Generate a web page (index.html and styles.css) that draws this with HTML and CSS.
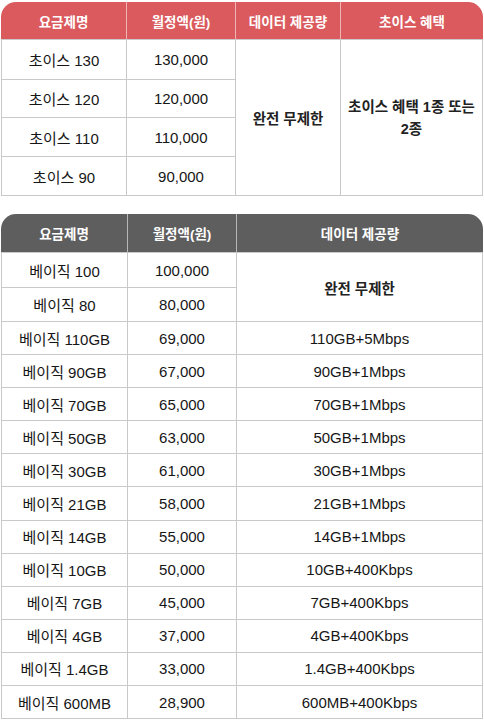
FILE: index.html
```html
<!DOCTYPE html>
<html lang="ko">
<head>
<meta charset="utf-8">
<link rel="stylesheet" href="styles.css">
</head>
<body>
<div class="page">
  <div class="wrap wrap-choice">
    <table class="plan plan-choice">
      <colgroup><col class="c1"><col class="c2"><col class="c3"><col class="c4"></colgroup>
      <thead>
        <tr><th>요금제명</th><th>월정액(원)</th><th>데이터 제공량</th><th>초이스 혜택</th></tr>
      </thead>
      <tbody>
        <tr class="r1"><td>초이스 130</td><td>130,000</td><td rowspan="4" class="strong">완전 무제한</td><td rowspan="4" class="strong benefit">초이스 혜택 1종 또는<br>2종</td></tr>
        <tr class="r2"><td>초이스 120</td><td>120,000</td></tr>
        <tr class="r3"><td>초이스 110</td><td>110,000</td></tr>
        <tr class="r4"><td>초이스 90</td><td>90,000</td></tr>
      </tbody>
    </table>
  </div>

  <div class="wrap wrap-basic">
    <table class="plan plan-basic">
      <colgroup><col class="b1"><col class="b2"><col class="b3"></colgroup>
      <thead>
        <tr><th>요금제명</th><th>월정액(원)</th><th>데이터 제공량</th></tr>
      </thead>
      <tbody>
        <tr class="tall1"><td>베이직 100</td><td>100,000</td><td rowspan="2" class="strong">완전 무제한</td></tr>
        <tr class="tall2"><td>베이직 80</td><td>80,000</td></tr>
        <tr><td>베이직 110GB</td><td>69,000</td><td>110GB+5Mbps</td></tr>
        <tr><td>베이직 90GB</td><td>67,000</td><td>90GB+1Mbps</td></tr>
        <tr><td>베이직 70GB</td><td>65,000</td><td>70GB+1Mbps</td></tr>
        <tr><td>베이직 50GB</td><td>63,000</td><td>50GB+1Mbps</td></tr>
        <tr><td>베이직 30GB</td><td>61,000</td><td>30GB+1Mbps</td></tr>
        <tr><td>베이직 21GB</td><td>58,000</td><td>21GB+1Mbps</td></tr>
        <tr><td>베이직 14GB</td><td>55,000</td><td>14GB+1Mbps</td></tr>
        <tr><td>베이직 10GB</td><td>50,000</td><td>10GB+400Kbps</td></tr>
        <tr><td>베이직 7GB</td><td>45,000</td><td>7GB+400Kbps</td></tr>
        <tr><td>베이직 4GB</td><td>37,000</td><td>4GB+400Kbps</td></tr>
        <tr><td>베이직 1.4GB</td><td>33,000</td><td>1.4GB+400Kbps</td></tr>
        <tr><td>베이직 600MB</td><td>28,900</td><td>600MB+400Kbps</td></tr>
      </tbody>
    </table>
  </div>
</div>
</body>
</html>
```

FILE: styles.css
```css
html, body {
  margin: 0;
  padding: 0;
  background: #ffffff;
}

body {
  font-family: "Liberation Sans", "Noto Sans CJK KR", sans-serif;
  color: #161616;
}

.page {
  padding: 2px 1px 0 1px;
  display: flex;
  flex-direction: column;
  gap: 18px;
}

.wrap {
  width: 482px;
  border-radius: 15px 15px 0 0;
  overflow: hidden;
}

.plan {
  width: 100%;
  border-collapse: separate;
  border-spacing: 0;
  table-layout: fixed;
}

.plan th {
  color: #ffffff;
  font-weight: 700;
  font-size: 13.5px;
  text-align: center;
  padding: 0;
  border-right: 1px solid rgba(255, 255, 255, 0.55);
  border-bottom: 1px solid #c9c9c9;
}

.plan th:last-child {
  border-right: none;
}

.plan td {
  font-size: 15px;
  text-align: center;
  padding: 0;
  border-right: 1px solid #c9c9c9;
  border-bottom: 1px solid #c9c9c9;
}

.plan td:first-child {
  border-left: 1px solid #c9c9c9;
}

.plan td.strong {
  font-weight: 600;
  font-size: 14.5px;
  color: #222222;
}

.plan td.benefit {
  line-height: 22px;
}

/* Choice table */
.plan-choice th {
  background: #da5a5d;
  height: 37px;
}

.plan-choice .c1 { width: 126px; }
.plan-choice .c2 { width: 109px; }
.plan-choice .c3 { width: 105px; }
.plan-choice .c4 { width: 142px; }

.plan-choice .r1 td { height: 39px; }
.plan-choice .r2 td { height: 37px; }
.plan-choice .r3 td { height: 38px; }
.plan-choice .r4 td { height: 38px; }

/* Basic table */
.plan-basic th {
  background: #5e5e5e;
  height: 38px;
}

.plan-basic .b1 { width: 127px; }
.plan-basic .b2 { width: 109px; }
.plan-basic .b3 { width: 246px; }

.plan-basic td {
  height: 32.1px;
}

.plan-basic tr.tall1 td {
  height: 34px;
}

.plan-basic tr.tall2 td {
  height: 33px;
}
```
